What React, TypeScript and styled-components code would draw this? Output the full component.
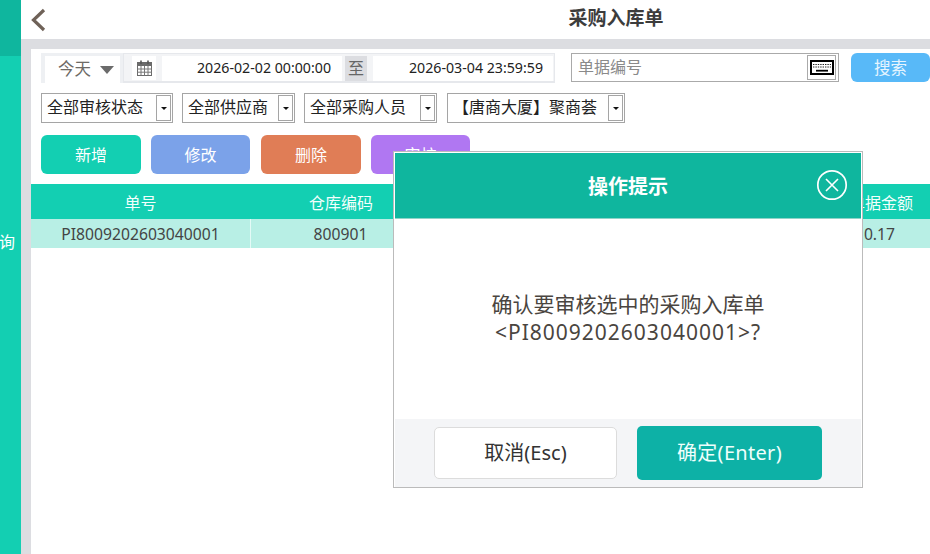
import React from "react";
import styled, { createGlobalStyle } from "styled-components";

const Global = createGlobalStyle`
  html, body { margin: 0; padding: 0; background: #fff; }
  * { box-sizing: border-box; }
  body { font-family: "Noto Sans", "Noto Sans CJK SC", sans-serif; }
`;

const Page = styled.div`
  position: relative;
  width: 930px;
  height: 554px;
  overflow: hidden;
  display: flex;
`;

const Sidebar = styled.aside`
  width: 21px;
  flex: none;
  display: flex;
  flex-direction: column;
  background: #13cfb2;
  overflow: hidden;
`;
const SideTop = styled.div`
  height: 56px;
  background: #0fb69e;
`;
const SideLabel = styled.div`
  height: 372px;
  display: flex;
  align-items: center;
  justify-content: flex-end;
  color: #fff;
  font-size: 16px;
  line-height: 20px;
  padding-right: 6px;
  white-space: nowrap;
`;

const Main = styled.main`
  flex: 1;
  min-width: 0;
  display: flex;
  flex-direction: column;
  background: #dcdde1;
`;
const Header = styled.header`
  height: 39px;
  flex: none;
  background: #fff;
  position: relative;
  display: flex;
  align-items: center;
  justify-content: center;
  padding-left: 281px;
  padding-bottom: 3px;
`;
const Back = styled.button`
  position: absolute;
  left: 9px;
  top: 8px;
  width: 17px;
  height: 24px;
  padding: 0;
  border: 0;
  background: none;
  display: block;
`;
const Title = styled.h1`
  margin: 0;
  font-size: 19px;
  font-weight: 700;
  color: #3c3c3c;
  line-height: 24px;
`;

const Panel = styled.section`
  flex: 1;
  margin: 10px 0 0 10px;
  background: #fff;
  padding-top: 4px;
  display: flex;
  flex-direction: column;
`;

const RowOne = styled.div`
  height: 30px;
  margin-left: 10px;
  display: flex;
  align-items: flex-start;
`;
const RangeTab = styled.div`
  width: 82px;
  height: 30px;
  flex: none;
  padding: 3px 0 0 4px;
  background: #eef0f3;
  display: flex;
`;
const RangeInner = styled.div`
  width: 75px;
  height: 27px;
  background: #fff;
  display: flex;
  align-items: center;
  padding: 0 0 3px 13px;
  gap: 9px;
  color: #6d6a66;
  font-size: 16.5px;
`;
const Caret = styled.span`
  width: 0;
  height: 0;
  border-left: 7px solid transparent;
  border-right: 7px solid transparent;
  border-top: 8px solid #6b6b6b;
  margin-top: 4px;
`;
const DateBox = styled.div`
  width: 432px;
  height: 30px;
  flex: none;
  border: 1px solid #e6e8ec;
  border-bottom-width: 2px;
  background: #f3f4f6;
  display: flex;
  align-items: center;
  padding: 2px 1px 1px 8px;
`;
const CalCell = styled.div`
  width: 24px;
  height: 24px;
  background: #fff;
  flex: none;
  display: flex;
  align-items: center;
  justify-content: center;
  margin-right: 6px;
`;
const DateInput = styled.div<{ $w: number; $pr: number }>`
  width: ${(p) => p.$w}px;
  height: 25px;
  flex: none;
  background: #fff;
  font-size: 14.2px;
  color: #222;
  line-height: 24px;
  text-align: right;
  padding-right: ${(p) => p.$pr}px;
  white-space: nowrap;
`;
const ToCell = styled.div`
  width: 22px;
  height: 25px;
  flex: none;
  margin: 0 6px 0 3px;
  background: #dcdde1;
  color: #666;
  font-size: 16px;
  line-height: 24px;
  text-align: center;
`;
const SearchField = styled.div`
  width: 268px;
  height: 29px;
  margin-left: 16px;
  flex: none;
  border: 1px solid #aaa;
  display: flex;
  align-items: center;
  justify-content: space-between;
  padding: 0 2px 0 6px;
  color: #8a8a8a;
  font-size: 16px;
  line-height: 24px;
`;
const FieldHint = styled.span`
  margin-top: -2px;
`;
const KeyButton = styled.div`
  width: 29px;
  height: 25px;
  margin-top: -1px;
  border: 1px solid #aaa;
  display: flex;
  align-items: center;
  justify-content: center;
`;
const SearchButton = styled.button`
  width: 79px;
  height: 29px;
  margin-left: 12px;
  flex: none;
  border: 0;
  padding: 0 0 1px;
  border-radius: 6px;
  background: #58b9f8;
  color: #e6f5ff;
  font: inherit;
  font-size: 16.5px;
`;

const RowTwo = styled.div`
  margin: 10px 0 0 10px;
  display: flex;
`;
const Select = styled.div<{ $w: number; $ml: number }>`
  width: ${(p) => p.$w}px;
  height: 30px;
  margin-left: ${(p) => p.$ml}px;
  flex: none;
  border: 1px solid #a5a5a5;
  display: flex;
  align-items: center;
  justify-content: space-between;
  padding: 0 1px 0 5px;
  font-size: 16px;
  line-height: 24px;
  color: #222;
  white-space: nowrap;
`;
const SelectText = styled.span`
  margin-top: -3px;
`;
const SelectArrow = styled.span`
  width: 15px;
  height: 26px;
  flex: none;
  border: 1px solid #a5a5a5;
  display: flex;
  align-items: center;
  justify-content: center;
  &::after {
    content: "";
    border-left: 3px solid transparent;
    border-right: 3px solid transparent;
    border-top: 3px solid #111;
  }
`;

const Actions = styled.div`
  margin: 12px 0 0 10px;
  display: flex;
`;
const Action = styled.button<{ $bg: string; $w: number; $ml: number }>`
  width: ${(p) => p.$w}px;
  height: 39px;
  margin-left: ${(p) => p.$ml}px;
  border: 0;
  padding: 0 0 2px;
  border-radius: 6px;
  background: ${(p) => p.$bg};
  color: #fff;
  font: inherit;
  font-size: 16px;
`;

const Table = styled.div`
  margin-top: 10px;
  display: flex;
  flex-direction: column;
`;
const HeadRow = styled.div`
  height: 35px;
  background: #13cfb2;
  color: #f2fffc;
  font-size: 16px;
  display: flex;
  align-items: center;
`;
const BodyRow = styled.div`
  height: 29px;
  background: #b8efe5;
  color: #444;
  font-size: 15.7px;
  display: flex;
  align-items: center;
`;
const Cell = styled.div<{ $w: number; $line?: boolean }>`
  width: ${(p) => p.$w}px;
  height: 100%;
  flex: none;
  display: flex;
  align-items: center;
  justify-content: center;
  white-space: nowrap;
  border-right: ${(p) => (p.$line ? "1px solid #e4faf6" : "0")};
`;
const Spacer = styled.div`
  flex: 1;
`;
const EndCell = styled.div<{ $pr: number }>`
  flex: none;
  padding-right: ${(p) => p.$pr}px;
  white-space: nowrap;
`;

const Modal = styled.div`
  position: absolute;
  left: 393px;
  top: 151px;
  width: 470px;
  height: 337px;
  border: 1px solid #bbb;
  background: #fff;
  padding: 1px 1px 0;
  display: flex;
  flex-direction: column;
`;
const ModalHead = styled.div`
  height: 66px;
  flex: none;
  background: #0fb69e;
  border-bottom: 1px solid #8fd4c8;
  position: relative;
  display: flex;
  align-items: center;
  justify-content: center;
  color: #fff;
  font-size: 20px;
  font-weight: 700;
  padding-bottom: 1px;
`;
const CloseButton = styled.button`
  position: absolute;
  left: 421px;
  top: 16px;
  width: 32px;
  height: 32px;
  padding: 0;
  border: 0;
  background: none;
  display: block;
`;
const ModalBody = styled.div`
  flex: 1;
  padding-top: 71px;
  text-align: center;
  font-size: 21px;
  line-height: 28px;
  color: #4a4540;
`;
const OrderNo = styled.span`
  letter-spacing: 1px;
`;
const ModalFoot = styled.div`
  height: 68px;
  flex: none;
  background: #f4f5f7;
  display: flex;
  align-items: center;
  padding: 0 0 1px 39px;
  gap: 20px;
`;
const Cancel = styled.button`
  width: 183px;
  height: 52px;
  background: #fff;
  border: 1px solid #dcdcdc;
  border-radius: 5px;
  color: #333;
  font: inherit;
  font-size: 20px;
  padding: 0 0 2px;
`;
const Confirm = styled.button`
  width: 185px;
  height: 54px;
  background: #0db1a6;
  border: 0;
  border-radius: 5px;
  color: #effffc;
  font: inherit;
  font-size: 20px;
  letter-spacing: 0.3px;
  padding: 0 0 2px;
`;

const selects = [
  { t: "全部审核状态", w: 132, ml: 0 },
  { t: "全部供应商", w: 113, ml: 9 },
  { t: "全部采购人员", w: 133, ml: 9 },
  { t: "【唐商大厦】聚商荟", w: 178, ml: 10 },
];
const actions = [
  { t: "新增", bg: "#13cfb2", w: 100, ml: 0 },
  { t: "修改", bg: "#7ba2e9", w: 99, ml: 10 },
  { t: "删除", bg: "#e07d56", w: 100, ml: 11 },
  { t: "审核", bg: "#b077f2", w: 99, ml: 10 },
];

export default function App() {
  return (
    <Page>
      <Global />
      <Sidebar>
        <SideTop />
        <SideLabel>询</SideLabel>
      </Sidebar>
      <Main>
        <Header>
          <Back aria-label="返回">
            <svg width="17" height="24" viewBox="0 0 17 24" fill="none">
              <path d="M14 2 L3.5 12 L14 22" stroke="#6f6258" strokeWidth="3.2" />
            </svg>
          </Back>
          <Title>采购入库单</Title>
        </Header>
        <Panel>
          <RowOne>
            <RangeTab>
              <RangeInner>
                今天
                <Caret />
              </RangeInner>
            </RangeTab>
            <DateBox>
              <CalCell>
                <svg width="15" height="16" viewBox="0 0 15 16">
                  <rect x="0.5" y="2.5" width="14" height="13" fill="#fff" stroke="#6b6b6b" />
                  <rect x="0.5" y="2.5" width="14" height="3.5" fill="#6b6b6b" />
                  <path d="M4 0.5V4M11 0.5V4" stroke="#555" strokeWidth="1.6" />
                  <path d="M0.5 9H14.5M0.5 12.2H14.5M4 6V15.5M7.5 6V15.5M11 6V15.5" stroke="#777" strokeWidth="1" />
                </svg>
              </CalCell>
              <DateInput $w={180} $pr={11}>2026-02-02 00:00:00</DateInput>
              <ToCell>至</ToCell>
              <DateInput $w={180} $pr={10}>2026-03-04 23:59:59</DateInput>
            </DateBox>
            <SearchField>
              <FieldHint>单据编号</FieldHint>
              <KeyButton>
                <svg width="24" height="15" viewBox="0 0 24 15">
                  <rect x="1" y="1" width="22" height="13" fill="#fff" stroke="#000" strokeWidth="2" />
                  <path d="M3 4.5H21M3 7H21" stroke="#222" strokeWidth="1.2" strokeDasharray="1.4 1" />
                  <path d="M6 10.7H18" stroke="#000" strokeWidth="1.8" />
                </svg>
              </KeyButton>
            </SearchField>
            <SearchButton>搜索</SearchButton>
          </RowOne>
          <RowTwo>
            {selects.map((s) => (
              <Select key={s.t} $w={s.w} $ml={s.ml}>
                <SelectText>{s.t}</SelectText>
                <SelectArrow />
              </Select>
            ))}
          </RowTwo>
          <Actions>
            {actions.map((a) => (
              <Action key={a.t} $bg={a.bg} $w={a.w} $ml={a.ml}>
                {a.t}
              </Action>
            ))}
          </Actions>
          <Table>
            <HeadRow>
              <Cell $w={219}>单号</Cell>
              <Cell $w={182}>仓库编码</Cell>
              <Spacer />
              <EndCell $pr={17}>单据金额</EndCell>
            </HeadRow>
            <BodyRow>
              <Cell $w={220} $line>PI8009202603040001</Cell>
              <Cell $w={179}>800901</Cell>
              <Spacer />
              <EndCell $pr={35}>0.17</EndCell>
            </BodyRow>
          </Table>
        </Panel>
      </Main>
      <Modal>
        <ModalHead>
          操作提示
          <CloseButton aria-label="关闭">
            <svg width="32" height="32" viewBox="0 0 32 32" fill="none">
              <circle cx="16" cy="16" r="14.2" stroke="#fff" strokeWidth="1.7" />
              <path d="M10 10L22 22M22 10L10 22" stroke="#fff" strokeWidth="1.6" />
            </svg>
          </CloseButton>
        </ModalHead>
        <ModalBody>
          确认要审核选中的采购入库单
          <br />
          <OrderNo>&lt;PI8009202603040001&gt;?</OrderNo>
        </ModalBody>
        <ModalFoot>
          <Cancel>取消(Esc)</Cancel>
          <Confirm>确定(Enter)</Confirm>
        </ModalFoot>
      </Modal>
    </Page>
  );
}
